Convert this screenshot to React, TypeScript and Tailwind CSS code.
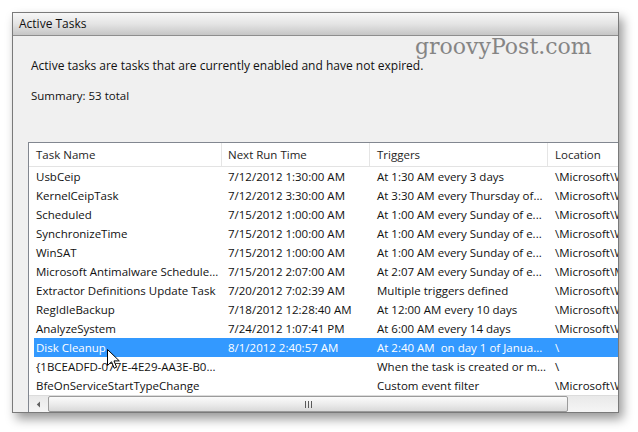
const rows: string[][] = [
  ["UsbCeip", "7/12/2012 1:30:00 AM", "At 1:30 AM every 3 days", "\\Microsoft\\W"],
  ["KernelCeipTask", "7/12/2012 3:30:00 AM", "At 3:30 AM every Thursday of...", "\\Microsoft\\W"],
  ["Scheduled", "7/15/2012 1:00:00 AM", "At 1:00 AM every Sunday of e...", "\\Microsoft\\W"],
  ["SynchronizeTime", "7/15/2012 1:00:00 AM", "At 1:00 AM every Sunday of e...", "\\Microsoft\\W"],
  ["WinSAT", "7/15/2012 1:00:00 AM", "At 1:00 AM every Sunday of e...", "\\Microsoft\\W"],
  ["Microsoft Antimalware Schedule...", "7/15/2012 2:07:00 AM", "At 2:07 AM every Sunday of e...", "\\Microsoft\\M"],
  ["Extractor Definitions Update Task", "7/20/2012 7:02:39 AM", "Multiple triggers defined", "\\Microsoft\\W"],
  ["RegIdleBackup", "7/18/2012 12:28:40 AM", "At 12:00 AM every 10 days", "\\Microsoft\\W"],
  ["AnalyzeSystem", "7/24/2012 1:07:41 PM", "At 6:00 AM every 14 days", "\\Microsoft\\W"],
  ["Disk Cleanup", "8/1/2012 2:40:57 AM", "At 2:40 AM  on day 1 of Janua...", "\\"],
  ["{1BCEADFD-077E-4E29-AA3E-B0...", "", "When the task is created or m...", "\\"],
  ["BfeOnServiceStartTypeChange", "", "Custom event filter", "\\Microsoft\\W"],
];

const SELECTED = 9;

function Cursor() {
  return (
    <svg
      className="absolute left-[107px] top-[349px]"
      width="14"
      height="22"
      viewBox="0 0 14 22"
    >
      <path
        d="M0.5 0.5 L0.5 16.5 L4.5 12.8 L7.2 19.2 L9.6 18.2 L7 11.9 L12.3 11.9 Z"
        fill="#ffffff"
        stroke="#000000"
        strokeWidth="1"
        strokeLinejoin="round"
      />
    </svg>
  );
}

function TaskList() {
  return (
    <div className="ml-[15px] mt-[38px] flex-1 flex flex-col bg-white border-l border-t border-b border-[#828790] overflow-hidden">
      {/* header */}
      <div className="flex h-[24px] shrink-0 items-center border-b border-[#e3e3e3] text-[#1e1e1e] whitespace-nowrap">
        <div className="w-[193px] shrink-0 h-full flex items-center pl-[7px] border-r border-[#e5e5e5]">Task Name</div>
        <div className="w-[148px] shrink-0 h-full flex items-center pl-[6px] border-r border-[#e5e5e5]">Next Run Time</div>
        <div className="w-[178px] shrink-0 h-full flex items-center pl-[7px] border-r border-[#e5e5e5]">Triggers</div>
        <div className="flex-1 min-w-0 h-full flex items-center pl-[7px]">Location</div>
      </div>
      {/* rows */}
      <div className="flex-1 overflow-hidden">
        {rows.map((r, i) => (
          <div key={i} className="pl-[5px] h-[19px]">
            <div
              className={
                i === SELECTED
                  ? "flex h-full items-center bg-[#3399ff] text-white whitespace-pre"
                  : "flex h-full items-center text-[#111] whitespace-pre"
              }
            >
              <div className="w-[188px] shrink-0 pl-[2px] overflow-hidden">{r[0]}</div>
              <div className="w-[148px] shrink-0 pl-[6px] overflow-hidden">{r[1]}</div>
              <div className="w-[178px] shrink-0 pl-[7px] overflow-hidden">{r[2]}</div>
              <div className="flex-1 min-w-0 pl-[7px] overflow-hidden">{r[3]}</div>
            </div>
          </div>
        ))}
      </div>
      {/* horizontal scrollbar */}
      <div className="h-[17px] shrink-0 flex items-stretch bg-gradient-to-b from-[#e9e9e9] to-[#f5f5f5] border-t border-[#dcdcdc]">
        <div className="w-[18px] flex items-center justify-center">
          <svg width="5" height="7" viewBox="0 0 5 7">
            <path d="M4 0.5 L0.8 3.5 L4 6.5 Z" fill="#606060" />
          </svg>
        </div>
        <div className="ml-[1px] w-[520px] rounded-[2px] border border-[#9b9b9b] bg-gradient-to-b from-[#fbfbfb] via-[#ececec] to-[#d9d9d9] flex items-center justify-center">
          <div className="flex gap-[2px]">
            <div className="w-[1px] h-[7px] bg-[#5a5a5a]" />
            <div className="w-[1px] h-[7px] bg-[#5a5a5a]" />
            <div className="w-[1px] h-[7px] bg-[#5a5a5a]" />
          </div>
        </div>
      </div>
    </div>
  );
}

export default function App() {
  return (
    <div
      className="relative w-[638px] h-[432px] bg-white overflow-hidden pt-[12px] pl-[12px] text-[11.5px]"
      style={{ fontFamily: '"Segoe UI", "Open Sans", "Noto Sans", sans-serif' }}
    >
      <div className="w-[607px] h-[401px] flex flex-col border border-[#7a7a7a] shadow-[4px_6px_10px_rgba(0,0,0,0.4)] overflow-hidden">
        <div className="h-[23px] shrink-0 flex items-center pl-[6px] bg-gradient-to-b from-[#f7f7f7] via-[#e4e4e4] to-[#c6c6c6] border-b border-[#8e8e8e] text-[12px] text-[#111]">
          Active Tasks
        </div>
        <div className="flex-1 flex flex-col bg-[#f0f0f0] text-[#111] pb-[1px]">
          <div className="pl-[18px] pt-[22px] leading-[16px] text-[12px]">
            Active tasks are tasks that are currently enabled and have not expired.
          </div>
          <div className="pl-[18px] mt-[14px] leading-[16px]">Summary: 53 total</div>
          <TaskList />
        </div>
      </div>
      <div
        className="absolute left-[415px] top-[36px] text-[22px] leading-[22px] text-[#858585]"
        style={{ fontFamily: '"DejaVu Serif", serif' }}
      >
        groovyPost.com
      </div>
      <Cursor />
    </div>
  );
}
